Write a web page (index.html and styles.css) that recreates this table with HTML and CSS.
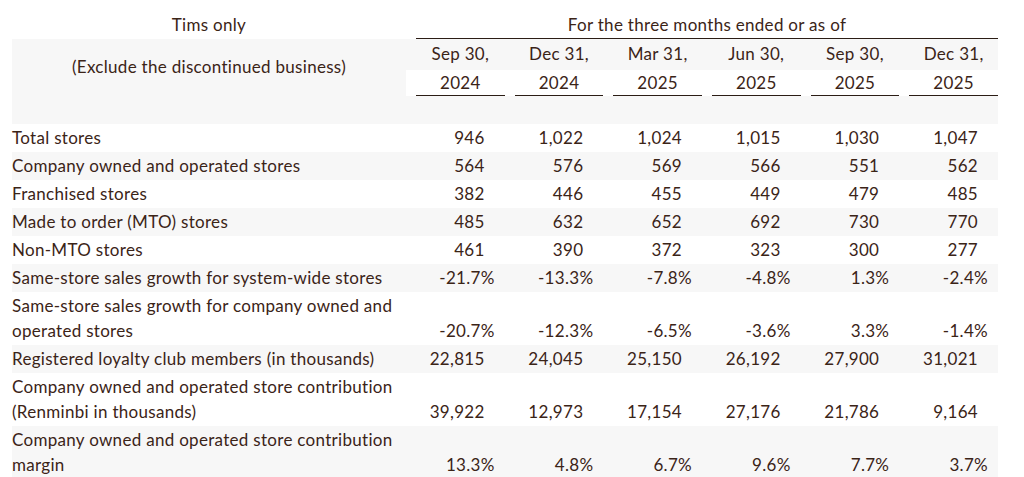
FILE: index.html
```html
<!DOCTYPE html>
<html lang="en">
<head>
<meta charset="utf-8">
<title>Tims only</title>
<link rel="stylesheet" href="styles.css">
</head>
<body>
<table class="kpi">
  <colgroup>
    <col class="c-label">
    <col class="c-val"><col class="c-val"><col class="c-val"><col class="c-val"><col class="c-val"><col class="c-val">
  </colgroup>
  <thead>
    <tr class="h1">
      <th class="lbl-head">Tims only</th>
      <th class="period" colspan="6"><div class="period-text">For the three months ended or as of</div></th>
    </tr>
    <tr class="h2 shade">
      <th class="lbl-head sub" rowspan="2">(Exclude the discontinued business)</th>
      <th class="date">Sep 30,</th>
      <th class="date">Dec 31,</th>
      <th class="date">Mar 31,</th>
      <th class="date">Jun 30,</th>
      <th class="date">Sep 30,</th>
      <th class="date">Dec 31,</th>
    </tr>
    <tr class="h3">
      <th class="date"><div class="yr">2024</div></th>
      <th class="date"><div class="yr">2024</div></th>
      <th class="date"><div class="yr">2025</div></th>
      <th class="date"><div class="yr">2025</div></th>
      <th class="date"><div class="yr">2025</div></th>
      <th class="date"><div class="yr">2025</div></th>
    </tr>
    <tr class="h4 shade">
      <th></th><th></th><th></th><th></th><th></th><th></th><th></th>
    </tr>
  </thead>
  <tbody>
    <tr>
      <td class="lbl">Total stores</td>
      <td class="n">946</td><td class="n">1,022</td><td class="n">1,024</td><td class="n">1,015</td><td class="n">1,030</td><td class="n">1,047</td>
    </tr>
    <tr class="shade">
      <td class="lbl">Company owned and operated stores</td>
      <td class="n">564</td><td class="n">576</td><td class="n">569</td><td class="n">566</td><td class="n">551</td><td class="n">562</td>
    </tr>
    <tr>
      <td class="lbl">Franchised stores</td>
      <td class="n">382</td><td class="n">446</td><td class="n">455</td><td class="n">449</td><td class="n">479</td><td class="n">485</td>
    </tr>
    <tr class="shade">
      <td class="lbl">Made to order (MTO) stores</td>
      <td class="n">485</td><td class="n">632</td><td class="n">652</td><td class="n">692</td><td class="n">730</td><td class="n">770</td>
    </tr>
    <tr>
      <td class="lbl">Non-MTO stores</td>
      <td class="n">461</td><td class="n">390</td><td class="n">372</td><td class="n">323</td><td class="n">300</td><td class="n">277</td>
    </tr>
    <tr class="shade">
      <td class="lbl">Same-store sales growth for system-wide stores</td>
      <td class="p">-21.7%</td><td class="p">-13.3%</td><td class="p">-7.8%</td><td class="p">-4.8%</td><td class="p">1.3%</td><td class="p">-2.4%</td>
    </tr>
    <tr>
      <td class="lbl">Same-store sales growth for company owned and<br>operated stores</td>
      <td class="p">-20.7%</td><td class="p">-12.3%</td><td class="p">-6.5%</td><td class="p">-3.6%</td><td class="p">3.3%</td><td class="p">-1.4%</td>
    </tr>
    <tr class="shade">
      <td class="lbl">Registered loyalty club members (in thousands)</td>
      <td class="n">22,815</td><td class="n">24,045</td><td class="n">25,150</td><td class="n">26,192</td><td class="n">27,900</td><td class="n">31,021</td>
    </tr>
    <tr>
      <td class="lbl">Company owned and operated store contribution<br>(Renminbi in thousands)</td>
      <td class="n">39,922</td><td class="n">12,973</td><td class="n">17,154</td><td class="n">27,176</td><td class="n">21,786</td><td class="n">9,164</td>
    </tr>
    <tr class="shade">
      <td class="lbl">Company owned and operated store contribution<br>margin</td>
      <td class="p">13.3%</td><td class="p">4.8%</td><td class="p">6.7%</td><td class="p">9.6%</td><td class="p">7.7%</td><td class="p">3.7%</td>
    </tr>
  </tbody>
</table>
</body>
</html>
```
FILE: styles.css
```css
html, body {
  margin: 0;
  padding: 0;
  background: #ffffff;
}

body {
  padding-left: 12px;
  font-family: "Lato", "Open Sans", "Liberation Sans", sans-serif;
  font-size: 17px;
  letter-spacing: 0.3px;
  color: #3b2417;
}

.kpi {
  border-collapse: collapse;
  table-layout: fixed;
  width: 986px;
}

.c-label { width: 394px; }
.c-val { width: 98.66px; }

.kpi th,
.kpi td {
  padding: 0;
  font-weight: 400;
  line-height: 25px;
}

.shade th,
.shade td,
.lbl-head.sub {
  background: #f7f7f7;
}

.h1 th {
  height: 37px;
  vertical-align: bottom;
  text-align: center;
  background: #ffffff;
}

.h1 .lbl-head {
  padding-bottom: 2px;
}

.period {
  padding-left: 10px !important;
}

.period-text {
  border-bottom: 1px solid #2b1d15;
  padding-bottom: 1px;
}

.lbl-head.sub {
  text-align: center;
  vertical-align: middle;
  padding-bottom: 2px;
}

.h2 th { height: 29px; }

.date {
  text-align: center;
  padding-left: 10px !important;
  vertical-align: middle;
}

.h2 th.date {
  padding-bottom: 2px;
}

.h3 th.date {
  background: #ffffff;
  height: 26px;
  vertical-align: bottom;
}

.yr {
  border-bottom: 1px solid #2b1d15;
  padding-bottom: 0;
  margin-bottom: 0;
}

.h4 th { height: 28px; }

.kpi td {
  padding-top: 0.5px;
  padding-bottom: 2.5px;
}

.lbl {
  text-align: left;
  padding-left: 0 !important;
}

.n,
.p {
  text-align: right;
  vertical-align: bottom;
}

.n { padding-right: 20px !important; }
.p { padding-right: 10px !important; }
```
